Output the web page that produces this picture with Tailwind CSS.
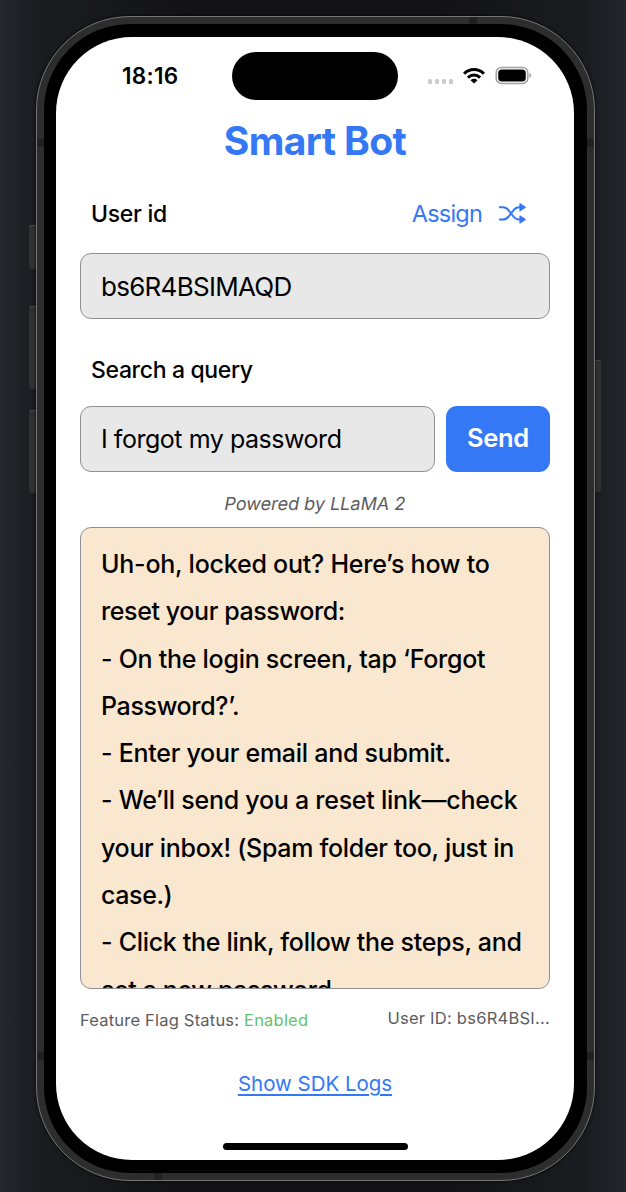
<!DOCTYPE html>
<html lang="en">
<head>
<meta charset="utf-8">
<title>Smart Bot</title>
<script src="https://cdn.jsdelivr.net/npm/@tailwindcss/browser@4"></script>
</head>
<body class="w-[626px] h-[1192px] overflow-hidden bg-[#1b1c20] font-['Inter','Liberation_Sans',sans-serif] text-black">
<div class="relative w-[626px] h-[1192px] pt-4 pl-[36px] bg-[linear-gradient(90deg,#26272c_0%,#1b1c20_6%,#131315_30%,#131315_70%,#1b1c20_94%,#25262b_100%)]">
  <!-- side buttons -->
  <div class="absolute left-[29px] top-[225px] w-2 h-[44px] bg-[#303030] border-t border-[#484848] rounded-l-[2px]"></div>
  <div class="absolute left-[29px] top-[306px] w-2 h-[83px] bg-[#303030] border-t border-[#484848] rounded-l-[2px]"></div>
  <div class="absolute left-[29px] top-[410px] w-2 h-[83px] bg-[#303030] border-t border-[#484848] rounded-l-[2px]"></div>
  <div class="absolute left-[593px] top-[360px] w-2 h-[132px] bg-[#303030] border-t border-[#484848] rounded-r-[2px]"></div>

  <!-- phone frame -->
  <div class="relative w-[559px] h-[1165px] rounded-[94px] border border-[#777] bg-[#2d2d2d] p-[7px] shadow-[0_0_3px_#000]">
    <!-- antenna bands -->
    <div class="absolute left-0 top-[122px] w-2 h-2 bg-[#212121]"></div>
    <div class="absolute right-0 top-[122px] w-2 h-2 bg-[#212121]"></div>
    <div class="absolute left-0 top-[1035px] w-2 h-2 bg-[#212121]"></div>
    <div class="absolute right-0 top-[1035px] w-2 h-2 bg-[#212121]"></div>
    <div class="absolute left-[432px] top-0 w-2 h-2 bg-[#212121]"></div>
    <div class="absolute left-[117px] bottom-0 w-2 h-2 bg-[#212121]"></div>

    <div class="relative h-full rounded-[86px] bg-black px-3 pt-[13px] pb-[13px]">
      <div class="w-[518px] h-[1123px] rounded-[76px] bg-white px-6 flex flex-col overflow-hidden">
        <!-- status bar -->
        <div class="flex h-[63px] shrink-0 pt-[15px]">
          <div class="w-[152px] pl-[42px] pt-3 text-[22.5px] leading-6 font-semibold whitespace-nowrap tracking-[0.3px]">18:16</div>
          <div class="w-[166px] h-12 rounded-full bg-black"></div>
          <div class="flex gap-[2.5px] ml-[29.5px] mt-[27px]">
            <i class="size-[4.5px] rounded-[1.5px] bg-[#cbcbcb]"></i><i class="size-[4.5px] rounded-[1.5px] bg-[#cbcbcb]"></i><i class="size-[4.5px] rounded-[1.5px] bg-[#cbcbcb]"></i><i class="size-[4.5px] rounded-[1.5px] bg-[#cbcbcb]"></i>
          </div>
          <svg class="ml-[8.5px] mt-[14px] w-6 h-[19px] shrink-0" viewBox="0 0 24 19" fill="none" stroke="#000" stroke-width="3">
            <path d="M2.1 7.7a14 14 0 0 1 19.800 0"/>
            <path d="M5.900 11.600a8.600 8.600 0 0 1 12.200 0"/>
            <path d="M12 17.600l-3.500-3.400a5 5 0 0 1 7 0z" fill="#000" stroke="none"/>
          </svg>
          <svg class="ml-[9px] mt-[14px] w-[37px] h-[19px] shrink-0" viewBox="0 0 37 19">
            <rect x="1.200" y="1.400" width="31.600" height="16" rx="5.200" fill="#fff" stroke="#a0a0a0" stroke-width="1.500"/>
            <rect x="3.200" y="3.500" width="27.600" height="11.900" rx="3.600"/>
            <path d="M34.400 7c2.200.6 2.200 4.400 0 5z" fill="#a0a0a0"/>
          </svg>
        </div>

        <h1 class="h-[54px] shrink-0 mt-[14px] text-center text-[39px] leading-[54px] font-bold text-[#3478f6] whitespace-nowrap tracking-[-0.6px]">Smart Bot</h1>

        <div class="flex items-center justify-between h-10 shrink-0 mt-[26px] pl-[11px] pr-6">
          <span class="text-[23px] font-medium tracking-[-0.3px]">User id</span>
          <span class="flex items-center gap-[17px] text-[#3478f6]">
            <span class="text-[23.5px] tracking-[-0.8px]">Assign</span>
            <svg class="w-[27px] h-[22px]" viewBox="0 0 27 22" fill="none" stroke="currentColor" stroke-width="2" stroke-linecap="round">
              <path d="M.8 4.300h3.200c2.700 0 4.200 1.200 5.700 3l4.700 6.200c1.500 1.900 3 3 5.500 3h1.500"/>
              <path d="M.8 16.500h3.200c2.700 0 4.200-1.200 5.700-3l4.700-6.200c1.500-1.900 3-3 5.500-3h1.500"/>
              <path d="M21 .8l5.200 3.500-5.200 3.500zM21 13l5.200 3.500-5.200 3.500z" fill="currentColor" stroke-width="1.200" stroke-linejoin="round"/>
            </svg>
          </span>
        </div>

        <div class="flex items-center h-[66px] shrink-0 mt-[19px] px-5 rounded-[11px] border border-[#909093] bg-[#e8e8e8] text-[26px] tracking-[-0.72px]">bs6R4BSIMAQD</div>

        <div class="flex items-center h-10 shrink-0 mt-[31px] pl-[11px] text-[23px] font-medium tracking-[-0.35px]">Search a query</div>

        <div class="flex gap-[11px] h-[66px] shrink-0 mt-4">
          <div class="flex items-center w-[355px] px-5 pt-px rounded-[11px] border border-[#909093] bg-[#e8e8e8] text-[25px] tracking-[-0.46px] whitespace-nowrap">I forgot my password</div>
          <div class="flex items-center justify-center w-[104px] pb-px rounded-[11px] bg-[#3478f6] text-white text-[25.5px] font-semibold tracking-[-0.3px]">Send</div>
        </div>

        <div class="h-6 shrink-0 mt-[20px] text-center text-[18px] leading-6 -skew-x-10 text-[#5c5c5e] whitespace-nowrap">Powered by LLaMA 2</div>

        <div class="h-[462px] shrink-0 mt-[11px] px-5 pt-[13px] rounded-[11px] border border-[#909092] bg-[#fae7d0] overflow-hidden text-[25px] leading-[47.300px] font-medium whitespace-nowrap">
          <p class="tracking-[-0.23px]">Uh-oh, locked out? Here’s how to</p>
          <p class="tracking-[-0.4px]">reset your password:</p>
          <p class="tracking-[-0.27px]">- On the login screen, tap ‘Forgot</p>
          <p class="tracking-[-0.35px]">Password?’.</p>
          <p class="tracking-[-0.27px]">- Enter your email and submit.</p>
          <p class="tracking-[-0.26px]">- We’ll send you a reset link—check</p>
          <p class="tracking-[-0.31px]">your inbox! (Spam folder too, just in</p>
          <p class="tracking-[-0.4px]">case.)</p>
          <p class="tracking-[-0.3px]">- Click the link, follow the steps, and</p>
          <p class="tracking-[-0.4px]">set a new password.</p>
        </div>

        <div class="flex justify-between h-6 shrink-0 mt-[19px] text-[16.500px] leading-6 text-[#5c5c5e] whitespace-nowrap tracking-[0.2px]">
          <span>Feature Flag Status: <span class="text-[#65c466]">Enabled</span></span>
          <span class="-mt-[2px] tracking-[0.25px]">User ID: bs6R4BSI...</span>
        </div>

        <div class="h-7 shrink-0 mt-[38px] text-center text-[20.500px] leading-7 text-[#3478f6] whitespace-nowrap tracking-[-0.03px]"><span class="underline decoration-[1.500px] underline-offset-[3px]">Show SDK Logs</span></div>

        <div class="w-[185px] h-[7px] shrink-0 mt-[45px] self-center rounded-full bg-black"></div>
      </div>
    </div>
  </div>
</div>
</body>
</html>
